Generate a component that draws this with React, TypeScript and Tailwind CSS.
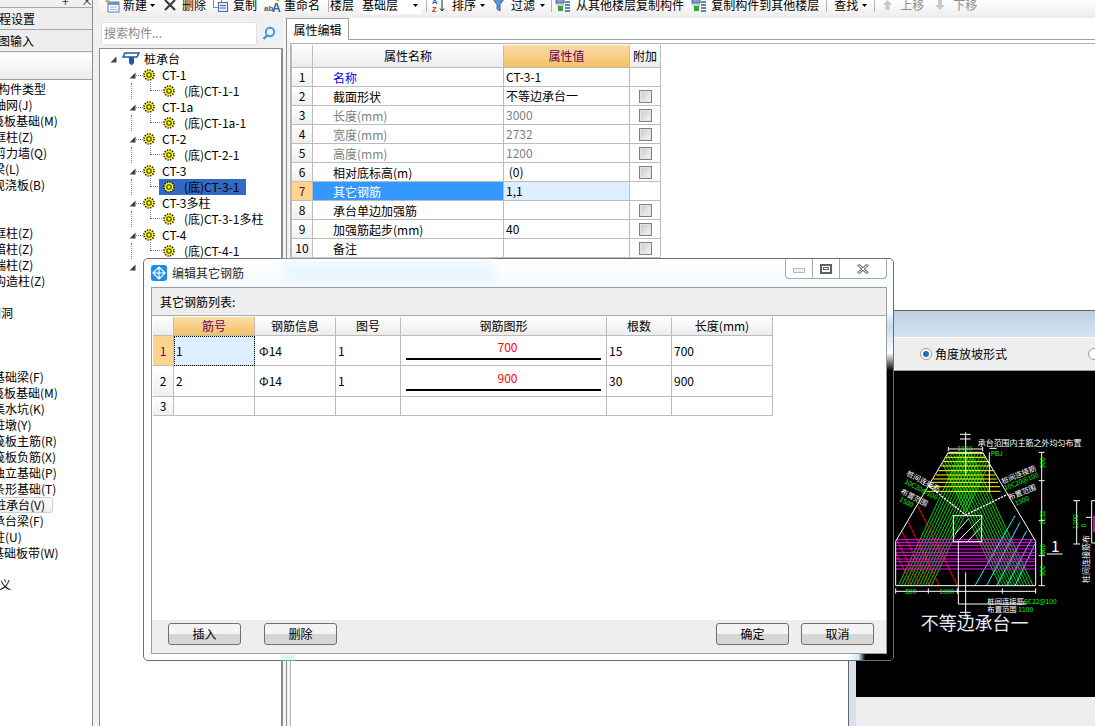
import React from 'react';

const leftItems = [
  { t: '构件类型', c: '-ml-[2px]' },
  { t: '轴网(J)', c: '-ml-[6px]' },
  { t: '筏板基础(M)', c: '-ml-[8px]' },
  { t: '框柱(Z)', c: '-ml-[6px]' },
  { t: '剪力墙(Q)', c: '-ml-[6px]' },
  { t: '梁(L)', c: '-ml-[7px]' },
  { t: '现浇板(B)', c: '-ml-[7px]' },
  { t: '', c: '' },
  { t: '', c: '' },
  { t: '框柱(Z)', c: '-ml-[6px]' },
  { t: '暗柱(Z)', c: '-ml-[6px]' },
  { t: '端柱(Z)', c: '-ml-[6px]' },
  { t: '构造柱(Z)', c: '-ml-[6px]' },
  { t: '', c: '' },
  { t: '门洞', c: '-ml-[11px]' },
  { t: '', c: '' },
  { t: '', c: '' },
  { t: '', c: '' },
  { t: '基础梁(F)', c: '-ml-[7px]' },
  { t: '筏板基础(M)', c: '-ml-[8px]' },
  { t: '集水坑(K)', c: '-ml-[7px]' },
  { t: '桩墩(Y)', c: '-ml-[7px]' },
  { t: '筏板主筋(R)', c: '-ml-[7px]' },
  { t: '筏板负筋(X)', c: '-ml-[7px]' },
  { t: '独立基础(P)', c: '-ml-[7px]' },
  { t: '条形基础(T)', c: '-ml-[7px]' },
  { t: '桩承台(V)', c: '-ml-[7px]' },
  { t: '承台梁(F)', c: '-ml-[7px]' },
  { t: '柱(U)', c: '-ml-[7px]' },
  { t: '基础板带(W)', c: '-ml-[8px]' },
  { t: '', c: '' },
  { t: '定义', c: '-ml-[13px]' },
];

const treeGroups = [
  { name: 'CT-1', child: '(底)CT-1-1' },
  { name: 'CT-1a', child: '(底)CT-1a-1' },
  { name: 'CT-2', child: '(底)CT-2-1' },
  { name: 'CT-3', child: '(底)CT-3-1', selected: true },
  { name: 'CT-3多柱', child: '(底)CT-3-1多柱' },
  { name: 'CT-4', child: '(底)CT-4-1' },
];

const props = [
  { name: '名称', value: 'CT-3-1', color: 'text-[#0000ff]', noCheck: true },
  { name: '截面形状', value: '不等边承台一' },
  { name: '长度(mm)', value: '3000', color: 'text-[#808080]' },
  { name: '宽度(mm)', value: '2732', color: 'text-[#808080]' },
  { name: '高度(mm)', value: '1200', color: 'text-[#808080]' },
  { name: '相对底标高(m)', value: ' (0)' },
  { name: '其它钢筋', value: '1,1', active: true, noCheck: true },
  { name: '承台单边加强筋', value: '' },
  { name: '加强筋起步(mm)', value: '40' },
  { name: '备注', value: '' },
];

const Gear = () => (
  <svg width="12" height="12" viewBox="0 0 12 12" className="shrink-0">
    <circle cx="6" cy="6" r="5" fill="#ffff00" stroke="#222" strokeWidth="1.6" strokeDasharray="1.4 1.2" />
    <circle cx="6" cy="6" r="2.2" fill="#ffff00" stroke="#333" strokeWidth="1.1" />
  </svg>
);

const Expander = () => (
  <svg width="7" height="7" viewBox="0 0 7 7" className="shrink-0">
    <path d="M6.5 0.5 V6.5 H0.5 Z" fill="#404040" />
  </svg>
);

const Caret = () => (
  <svg width="5" height="3" viewBox="0 0 5 3" className="shrink-0">
    <path d="M0 0 H5 L2.5 3 Z" fill="#000" />
  </svg>
);

const Sep = ({ c }: { c: string }) => <div className={`w-px h-[14px] bg-[#b4b4b4] shrink-0 ${c}`} />;

const Check = () => (
  <div className="w-[13px] h-[13px] border border-[#808080] bg-gradient-to-br from-[#c8c8c8] to-[#f7f7f7] ring-1 ring-inset ring-[#e4e4e4]" />
);

const FloorsIcon = ({ arrow }: { arrow: string }) => (
  <svg width="16" height="16" viewBox="0 0 16 16" className="shrink-0">
    <rect x="1" y="0" width="8" height="6" fill="#7f9fc8" stroke="#3a5f94" />
    <path d="M10 2h5M10 5h5M10 8h5M10 11h5M10 14h5" stroke="#3a5f94" strokeWidth="1.4" />
    <path d="M1 8 H9" stroke="#999" />
    <rect x="3" y="9" width="5" height="5" fill={arrow} />
  </svg>
);

const HeadCell = ({ children, on }: { children?: React.ReactNode; on?: boolean }) => (
  <div
    className={`flex items-center justify-center border-r border-b border-[#bdbdbd] ${
      on ? 'bg-gradient-to-b from-[#fbdca6] to-[#f3c163] text-[#6a006a]' : 'bg-gradient-to-b from-white to-[#ececec]'
    }`}
  >
    {children}
  </div>
);

const Cell = ({ children, c = '' }: { children?: React.ReactNode; c?: string }) => (
  <div className={`flex items-center border-r border-b border-[#bdbdbd] whitespace-pre ${c}`}>{children}</div>
);

const DlgButton = ({ children, c = '' }: { children: React.ReactNode; c?: string }) => (
  <button className={`w-[73px] h-[22px] shrink-0 border border-[#707070] rounded-[3px] bg-gradient-to-b from-[#f4f4f4] from-50% to-[#d6d6d6] to-50% text-[12px] ${c}`}>
    {children}
  </button>
);

const range = (n: number) => Array.from({ length: n }, (_, i) => i);

const CadDrawing = () => (
  <svg viewBox="856 372 239 326" className="block w-full h-full" fontFamily="'Noto Sans CJK SC', sans-serif">
    <g transform="translate(880 420) scale(0.33333)">
      <defs>
        <clipPath id="cap">
          <path d="M205 100H308L467 367V500H47V367Z" />
        </clipPath>
      </defs>
      <g clipPath="url(#cap)" stroke="#00ff00" strokeWidth="2.5">
        {range(12).map(i => (
          <line key={i} x1={243 + i * 9} y1={100} x2={243 + i * 9 - 188} y2={500} />
        ))}
        {range(12).map(i => (
          <line key={i} x1={271 - i * 9} y1={100} x2={271 - i * 9 + 188} y2={500} />
        ))}
      </g>
      <g stroke="#ffff00" strokeWidth="3">
        <line x1="205" y1="103" x2="310" y2="103" />
        <line x1="198" y1="115" x2="318" y2="115" />
        <line x1="190" y1="128" x2="325" y2="128" />
        <line x1="183" y1="141" x2="332" y2="141" />
        <line x1="175" y1="155" x2="340" y2="155" />
        <line x1="168" y1="168" x2="346" y2="168" />
        <line x1="160" y1="180" x2="350" y2="180" />
        <line x1="155" y1="190" x2="355" y2="190" />
        <line x1="150" y1="203" x2="360" y2="203" />
        <line x1="140" y1="217" x2="362" y2="217" />
      </g>
      <g stroke="#ff0000" strokeWidth="3">
        <line x1="113" y1="260" x2="232" y2="500" />
        <line x1="85" y1="310" x2="178" y2="500" />
        <line x1="65" y1="335" x2="150" y2="500" />
        <line x1="50" y1="362" x2="120" y2="500" />
        <line x1="47" y1="400" x2="95" y2="500" />
      </g>
      <g stroke="#00ffff" strokeWidth="3">
        <line x1="405" y1="290" x2="285" y2="500" />
        <line x1="420" y1="310" x2="320" y2="500" />
        <line x1="440" y1="335" x2="350" y2="500" />
        <line x1="455" y1="360" x2="380" y2="500" />
        <line x1="465" y1="375" x2="405" y2="500" />
      </g>
      <g stroke="#ff00ff" strokeWidth="3">
        {[362, 370, 380, 390, 400, 410, 420, 428, 440, 450].map(y => (
          <line key={y} x1="47" y1={y} x2="467" y2={y} />
        ))}
      </g>
      <g fill="none" stroke="#fff" strokeWidth="3">
        <path d="M205 100H308L467 367V500H47V367Z" />
        <rect x="220" y="290" width="85" height="78" />
        <path d="M225 345L265 300M235 365L300 300M265 365L303 325" />
        <path d="M145 200L257 288L385 225" strokeWidth="4" strokeDasharray="7 3" />
        <path d="M235 368V555H440" />
        <path d="M257 40V170M257 460V592" />
        <path d="M240 46H272M240 60H272M240 580H272M240 590H272" />
        <path d="M328 100V220M328 88H350" />
        <path d="M205 90H308M205 84V96M308 84V96" />
        <path d="M485 100V500M476 100H494M476 185H494M476 305H494M476 410H494M476 500H494" />
        <path d="M47 517H467M47 508V524M145 508V524M232 508V524M367 508V524M467 508V524" />
        <path d="M500 405H548" />
        <path d="M590 245V375M580 245H600M580 375H600" />
        <path d="M635 245H650M635 245V372H650M618 295H635" />
        <path d="M642 290V340" stroke="#ff00ff" strokeWidth="5" />
      </g>
      <g fontSize="24">
        <text x="293" y="82" fill="#fff">承台范围内主筋之外均匀布置</text>
        <text x="332" y="112" fill="#00ff00" fontSize="20">PBJ</text>
        <text x="232" y="96" fill="#00ff00" fontSize="20">1000</text>
        <text x="76" y="525" fill="#00ff00" fontSize="20">800</text>
        <text x="178" y="525" fill="#00ff00" fontSize="20">1000</text>
        <text x="322" y="554" fill="#fff" fontSize="22">桩间连接筋</text>
        <text x="432" y="554" fill="#00ff00" fontSize="20">6C22@100</text>
        <text x="322" y="578" fill="#fff" fontSize="22">布置范围</text>
        <text x="415" y="578" fill="#00ff00" fontSize="20">1100</text>
        <text x="513" y="398" fill="#fff" fontSize="46">1</text>
        <text transform="translate(494 148) rotate(-90)" fill="#00ff00" fontSize="20">500</text>
        <text transform="translate(494 318) rotate(-90)" fill="#00ff00" fontSize="20">1232</text>
        <text transform="translate(494 408) rotate(-90)" fill="#00ff00" fontSize="20">600</text>
        <text transform="translate(494 472) rotate(-90)" fill="#00ff00" fontSize="20">500</text>
        <text transform="translate(594 330) rotate(-90)" fill="#00ff00" fontSize="20">1200</text>
        <text transform="translate(618 325) rotate(-90)" fill="#00ff00" fontSize="20">0</text>
        <text transform="translate(628 492) rotate(-90)" fill="#fff" fontSize="24">桩间连接筋布</text>
        <text transform="translate(78 168) rotate(28)" fill="#fff" fontSize="22">桩间连接筋</text>
        <text transform="translate(72 192) rotate(28)" fill="#00ff00" fontSize="20">10C20@100</text>
        <text transform="translate(60 222) rotate(28)" fill="#fff" fontSize="22">布置范围</text>
        <text transform="translate(56 245) rotate(28)" fill="#00ff00" fontSize="20">1500</text>
        <text transform="translate(368 195) rotate(-22)" fill="#fff" fontSize="22">桩间连接筋</text>
        <text transform="translate(376 214) rotate(-22)" fill="#00ff00" fontSize="20">10C20@100</text>
        <text transform="translate(388 244) rotate(-22)" fill="#fff" fontSize="22">布置范围</text>
        <text transform="translate(408 260) rotate(-22)" fill="#00ff00" fontSize="20">1500</text>
        <text x="122" y="634" fill="#e4ecf8" fontSize="54">不等边承台一</text>
      </g>
    </g>
  </svg>
);

export default function App() {
  return (
    <div className="relative w-[1095px] h-[726px] overflow-hidden bg-white text-[12px] leading-none text-black font-['Noto_Sans_CJK_SC',sans-serif]">
      <div className="flex h-full">
        {/* left nav, cut off by the screenshot edge */}
        <div className="w-[93px] shrink-0 flex flex-col bg-[#f0f0f0] border-r border-[#8c8c8c] overflow-hidden">
          <div className="h-[7px] relative text-[#333]">
            <span className="absolute left-[62px] -top-[5px]">+</span>
            <span className="absolute left-[81px] -top-[5px]">×</span>
          </div>
          <div className="h-[23px] flex items-center border-b border-t border-[#a8a8a8] bg-[#eeeeee] whitespace-nowrap">
            <span className="-ml-[13px]">工程设置</span>
          </div>
          <div className="h-[22px] flex items-center border-b border-[#a8a8a8] bg-[#eeeeee] whitespace-nowrap">
            <span className="-ml-[14px]">绘图输入</span>
          </div>
          <div className="h-[27px] mt-[1px] bg-gradient-to-b from-white to-[#ececec] border-b border-[#a0a0a0]" />
          <div className="flex-1 bg-white pt-px whitespace-nowrap">
            {leftItems.map((it, i) => (
              <div key={i} className="h-[16px] flex items-center">
                {it.t === '桩承台(V)' ? (
                  <span className="h-[16px] w-[60px] -ml-[7px] flex items-center border border-[#d0d0d0] rounded-[3px] bg-gradient-to-b from-white to-[#eeeeee]">
                    {it.t}
                  </span>
                ) : (
                  <span className={it.c}>{it.t}</span>
                )}
              </div>
            ))}
          </div>
        </div>
        <div className="w-[6px] shrink-0 bg-[#f0f0f0]" />

        <div className="flex-1 min-w-0 flex flex-col">
          {/* toolbar */}
          <div className="h-[18px] shrink-0 bg-gradient-to-b from-white to-[#ececec] overflow-hidden">
            <div className="-mt-[4px] h-[18px] flex items-center whitespace-nowrap">
              <svg width="17" height="16" viewBox="0 0 17 16" className="ml-[4px] shrink-0">
                <path d="M2 0l2 2 3-1-1 3-3 1z" fill="#f2c230" stroke="#a5841a" strokeWidth="0.5" />
                <rect x="5" y="5" width="11" height="10" fill="#fff" stroke="#5a7fb0" />
                <rect x="5" y="5" width="11" height="3" fill="#6e94c6" />
                <path d="M7 10h7M7 12.5h7" stroke="#9cb5d4" />
              </svg>
              <span className="ml-[3px]">新建</span>
              <span className="ml-[3px]"><Caret /></span>
              <svg width="12" height="12" viewBox="0 0 12 12" className="ml-[9px] shrink-0">
                <path d="M1 1L11 11M11 1L1 11" stroke="#3c3c3c" strokeWidth="2.2" />
              </svg>
              <span className="ml-[6px]">删除</span>
              <svg width="15" height="14" viewBox="0 0 15 14" className="ml-[7px] shrink-0">
                <rect x="0.5" y="0.5" width="8" height="9" fill="#fff" stroke="#6f8cb3" />
                <rect x="5.5" y="4.5" width="9" height="9" fill="#dfe9f6" stroke="#4a6f9f" />
                <path d="M7 7.5h6M7 10h6" stroke="#4a6f9f" />
              </svg>
              <span className="ml-[5px]">复制</span>
              <svg width="18" height="16" viewBox="0 0 18 16" className="ml-[7px] shrink-0" fontFamily="'Liberation Sans', sans-serif" fontWeight="700">
                <path d="M9 0L15 4" stroke="#d8a62a" strokeWidth="2" />
                <text x="0" y="14" fontSize="8" fill="#555">ab</text>
                <text x="8" y="15" fontSize="12" fill="#2b5da8">A</text>
              </svg>
              <span className="ml-[2px]">重命名</span>
              <Sep c="ml-[8px]" />
              <span className="ml-[1px]">楼层</span>
              <div className="ml-[6px] w-[62px] h-[18px] flex items-center bg-white shrink-0">
                <span className="ml-[2px]">基础层</span>
                <span className="ml-[15px]"><Caret /></span>
              </div>
              <Sep c="ml-[4px]" />
              <svg width="13" height="16" viewBox="0 0 13 16" className="ml-[5px] shrink-0" fontFamily="'Liberation Sans', sans-serif" fontWeight="700">
                <text x="0" y="7" fontSize="7.5" fill="#2b5da8">A</text>
                <text x="0" y="15" fontSize="7.5" fill="#b02a2a">Z</text>
                <path d="M10 2V14M8 11.5L10 14L12 11.5" fill="none" stroke="#222" />
              </svg>
              <span className="ml-[7px]">排序</span>
              <span className="ml-[4px]"><Caret /></span>
              <svg width="13" height="14" viewBox="0 0 13 14" className="ml-[7px] shrink-0">
                <path d="M0.5 0.5H12.5L8 6.5V13L5 11V6.5Z" fill="#5b93d8" stroke="#2f69ad" />
              </svg>
              <span className="ml-[6px]">过滤</span>
              <span className="ml-[5px]"><Caret /></span>
              <Sep c="ml-[6px]" />
              <span className="ml-[3px]"><FloorsIcon arrow="#2fa83a" /></span>
              <span className="ml-[5px]">从其他楼层复制构件</span>
              <span className="ml-[7px]"><FloorsIcon arrow="#2fa83a" /></span>
              <span className="ml-[4px]">复制构件到其他楼层</span>
              <Sep c="ml-[7px]" />
              <span className="ml-[7px]">查找</span>
              <span className="ml-[4px]"><Caret /></span>
              <Sep c="ml-[7px]" />
              <svg width="9" height="10" viewBox="0 0 9 10" className="ml-[8px] shrink-0">
                <path d="M4.5 0L9 5H6.5V10H2.5V5H0Z" fill="#c8c8c8" />
              </svg>
              <span className="ml-[8px] text-[#8f8f8f]">上移</span>
              <svg width="10" height="10" viewBox="0 0 10 10" className="ml-[11px] shrink-0">
                <path d="M5 10L10 5H7V0H3V5H0Z" fill="#c8c8c8" />
              </svg>
              <span className="ml-[8px] text-[#8f8f8f]">下移</span>
            </div>
          </div>

          <div className="flex-1 min-h-0 flex">
            {/* component tree */}
            <div className="w-[184px] shrink-0 flex flex-col bg-[#f0f0f0]">
              <div className="h-[30px] shrink-0 flex items-center pl-[2px]">
                <div className="w-[156px] h-[23px] flex items-center pl-[2px] bg-white border border-[#dce3ec] rounded-[2px] text-[#8a8a8a]">
                  搜索构件...
                </div>
                <svg width="14" height="14" viewBox="0 0 14 14" className="ml-[5px]">
                  <circle cx="8" cy="6" r="4.2" fill="#e8f4fc" stroke="#3d9bdc" strokeWidth="2" />
                  <path d="M5 9.5L1.5 13" stroke="#3d9bdc" strokeWidth="2.4" />
                </svg>
              </div>
              <div className="flex-1 bg-white border-t border-l border-r-2 border-[#8c8c8c] pt-[2px] overflow-hidden whitespace-nowrap">
                <div className="h-[16px] flex items-center pl-[10px]">
                  <Expander />
                  <svg width="18" height="14" viewBox="0 0 18 14" className="ml-[5px] shrink-0">
                    <path d="M3 1H17L15 5H1Z" fill="#fff" stroke="#1d5aa6" strokeWidth="1.6" />
                    <path d="M7 5H12V11L9.5 13.5L7 11Z" fill="#1d5aa6" />
                  </svg>
                  <span className="ml-[4px]">桩承台</span>
                </div>
                {treeGroups.map(g => (
                  <React.Fragment key={g.name}>
                    <div className="h-[16px] flex items-center pl-[29px]">
                      <Expander />
                      <span className="w-[7px] border-t border-dotted border-[#808080]" />
                      <Gear />
                      <span className="ml-[7px]">{g.name}</span>
                    </div>
                    <div className="relative h-[16px] flex items-center pl-[59px]">
                      <span className="absolute left-[31px] top-0 h-[16px] border-l border-dotted border-[#808080]" />
                      <span className="absolute left-[50px] -top-[1px] h-[9px] w-[12px] border-l border-b border-dotted border-[#808080]" />
                      <div className={`flex items-center h-[16px] pl-[4px] pr-[3px] min-w-[87px] ${g.selected ? 'bg-[#316ac5]' : ''}`}>
                        <Gear />
                        <span className="ml-[9px]">{g.child}</span>
                      </div>
                    </div>
                  </React.Fragment>
                ))}
                <div className="h-[16px] flex items-center pl-[29px]">
                  <Expander />
                </div>
              </div>
            </div>
            <div className="w-[3px] shrink-0 bg-[#f4f4f4]" />

            {/* property editor */}
            <div className="flex-1 min-w-0 flex flex-col bg-white border-l border-[#8c8c8c]">
              <div className="h-[22px] shrink-0 border-b border-[#a0a0a0]">
                <div className="w-[62px] h-[22px] flex items-center justify-center bg-white border-r border-t border-[#a0a0a0]">属性编辑</div>
              </div>
              <div className="flex-1 flex">
                <div className="w-[3px] shrink-0 bg-[#f4f4f4]" />
                <div className="flex-1 mt-[3px] border-t border-l border-[#b0b0b0] pt-px">
                  <div className="w-[370px] grid grid-cols-[21px_191px_126px_31px] grid-rows-[23px_repeat(10,19px)] border-l border-[#bdbdbd]">
                    <HeadCell />
                    <HeadCell>属性名称</HeadCell>
                    <HeadCell on>属性值</HeadCell>
                    <HeadCell>附加</HeadCell>
                    {props.map((p, i) => (
                      <React.Fragment key={p.name}>
                        <Cell c={`justify-center ${p.active ? 'bg-[#fbd58e] text-[#6a006a]' : 'bg-gradient-to-b from-white to-[#efefef]'}`}>{i + 1}</Cell>
                        <Cell c={`pl-[20px] pt-px ${p.active ? 'bg-[#3399ff] text-white' : p.color ?? ''}`}>{p.name}</Cell>
                        <Cell c={`pl-[2px] ${p.active ? 'bg-[#dceeff]' : i >= 2 && i <= 4 ? 'text-[#808080]' : ''}`}>{p.value}</Cell>
                        <Cell c="justify-center">{!p.noCheck && <Check />}</Cell>
                      </React.Fragment>
                    ))}
                  </div>
                </div>
              </div>
            </div>
          </div>
        </div>
      </div>

      {/* shape preview window behind the dialog */}
      <div className="absolute left-[848px] top-[310px] w-[247px] h-[416px] flex flex-col border-l border-[#666] bg-[#d6e2f0]">
        <div className="h-[28px] shrink-0 border-t border-[#666] bg-gradient-to-b from-[#bccfe0] to-[#d6e4f1] border-b border-b-white" />
        <div className="h-[33px] shrink-0 flex items-center pl-[71px] bg-[#eeeeee] border-b border-[#a0a0a0] whitespace-nowrap">
          <span className="w-[12px] h-[12px] shrink-0 rounded-full border border-[#9a9a9a] bg-white flex items-center justify-center">
            <span className="w-[6px] h-[6px] rounded-full bg-[#1f6fb8]" />
          </span>
          <span className="ml-[3px]">角度放坡形式</span>
          <span className="ml-[81px] w-[12px] h-[12px] shrink-0 rounded-full border border-[#9a9a9a] bg-white" />
        </div>
        <div className="h-[326px] shrink-0 ml-[7px] bg-black">
          <CadDrawing />
        </div>
        <div className="flex-1 ml-[7px] bg-[#eeeeee]" />
      </div>

      {/* edit dialog */}
      <div className="absolute left-[143px] top-[258px] w-[751px] h-[403px] flex flex-col bg-white border border-[#6e6e6e] rounded-[5px]">
        <div className="relative h-[28px] shrink-0 flex items-center pl-[7px] bg-gradient-to-b from-white to-[#f4fbff] rounded-t-[5px]">
          <div className="absolute left-[140px] top-[2px] w-[210px] h-[24px] bg-[#eaf6ff] blur-[4px]" />
          <svg width="16" height="16" viewBox="0 0 16 16" className="relative shrink-0">
            <rect width="16" height="16" rx="3" fill="#1a8fe8" />
            <path d="M8 2V14M2 8H14M5 5L8 2L11 5M5 11L8 14L11 11M5 5L2 8L5 11M11 5L14 8L11 11" fill="none" stroke="#fff" strokeWidth="1.2" />
          </svg>
          <span className="relative ml-[5px] text-[#2a2a2a]">编辑其它钢筋</span>
          <div className="absolute right-[6px] top-0 w-[102px] h-[20px] flex border border-t-0 border-[#a8a8a8] rounded-b-[4px] bg-white">
            <div className="w-[27px] flex items-center justify-center border-r border-[#a8a8a8]">
              <span className="w-[12px] h-[5px] mt-[3px] border border-[#b8b8b8] bg-[#f0f0f0]" />
            </div>
            <div className="w-[27px] flex items-center justify-center border-r border-[#a8a8a8]">
              <span className="w-[12px] h-[10px] border-2 border-[#606060] flex items-center justify-center">
                <span className="w-[6px] h-[3px] border border-[#606060]" />
              </span>
            </div>
            <div className="flex-1 flex items-center justify-center">
              <svg width="12" height="10" viewBox="0 0 12 10">
                <path d="M1 0.5L11 9.5M11 0.5L1 9.5" stroke="#707070" strokeWidth="3" />
                <path d="M1 0.5L11 9.5M11 0.5L1 9.5" stroke="#fff" strokeWidth="1" />
              </svg>
            </div>
          </div>
        </div>
        <div className="relative z-10 flex-1 min-h-0 ml-[7px] mr-[6px] mb-[6px] flex flex-col border border-[#9c9c9c]">
          <div className="h-[28px] shrink-0 flex items-center pl-[8px] bg-[#eeeeee] border-b border-[#aaaaaa]">其它钢筋列表:</div>
          <div className="pt-px pl-px flex-1 bg-white">
            <div className="w-[620px] grid grid-cols-[21px_81px_81px_65px_206px_65px_101px] grid-rows-[19px_30px_31px_19px]">
              <HeadCell />
              <HeadCell on>筋号</HeadCell>
              <HeadCell>钢筋信息</HeadCell>
              <HeadCell>图号</HeadCell>
              <HeadCell>钢筋图形</HeadCell>
              <HeadCell>根数</HeadCell>
              <HeadCell>长度(mm)</HeadCell>

              <Cell c="justify-center bg-[#fbd58e] text-[#6a006a]">1</Cell>
              <Cell c="pl-[2px] bg-[#dceeff] outline-1 outline-dotted -outline-offset-1 outline-black">1</Cell>
              <Cell c="pl-[4px]">Φ14</Cell>
              <Cell c="pl-[2px]">1</Cell>
              <Cell c="flex-col justify-end pb-[5px]">
                <span className="text-[#ff0000] mb-[5px] ml-[8px]">700</span>
                <span className="w-[195px] h-[2px] bg-black" />
              </Cell>
              <Cell c="pl-[2px]">15</Cell>
              <Cell c="pl-[2px]">700</Cell>

              <Cell c="justify-center bg-gradient-to-b from-white to-[#efefef]">2</Cell>
              <Cell c="pl-[2px]">2</Cell>
              <Cell c="pl-[4px]">Φ14</Cell>
              <Cell c="pl-[2px]">1</Cell>
              <Cell c="flex-col justify-end pb-[5px]">
                <span className="text-[#ff0000] mb-[5px] ml-[8px]">900</span>
                <span className="w-[195px] h-[2px] bg-black" />
              </Cell>
              <Cell c="pl-[2px]">30</Cell>
              <Cell c="pl-[2px]">900</Cell>

              <Cell c="justify-center bg-gradient-to-b from-white to-[#efefef]">3</Cell>
              <Cell />
              <Cell />
              <Cell />
              <Cell />
              <Cell />
              <Cell />
            </div>
          </div>
          <div className="h-[33px] shrink-0 flex pt-[3px] pl-[16px] pr-[12px] bg-[#eeeeee]">
            <DlgButton>插入</DlgButton>
            <DlgButton c="ml-[23px]">删除</DlgButton>
            <DlgButton c="ml-auto">确定</DlgButton>
            <DlgButton c="ml-[12px]">取消</DlgButton>
          </div>
        </div>
        {/* glass margin picking up what lies behind the dialog */}
        <div className="absolute right-0 top-[52px] w-[6px] h-[60px] bg-[linear-gradient(to_bottom,#fff,#c5dcf2_25%,#fff_70%,#000)]" />
        <div className="absolute right-0 top-[112px] bottom-0 w-[6px] bg-black rounded-br-[4px]" />
        <div className="absolute left-[703px] right-0 bottom-0 h-[6px] bg-[linear-gradient(to_right,#fff,#cfeaff_25%,#000_40%)] rounded-br-[4px]" />
        <div className="absolute left-[137px] bottom-0 w-[14px] h-[5px] bg-[#d8f2ff] blur-[1px]" />
      </div>
    </div>
  );
}
